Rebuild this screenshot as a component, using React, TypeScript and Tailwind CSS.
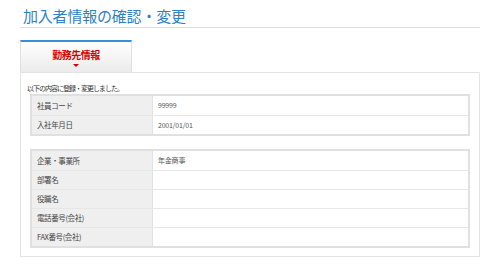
import React from 'react';

const font = { fontFamily: '"Noto Sans CJK JP", "Noto Sans", sans-serif' };

type Row = { label: string; value: string };

const empRows: Row[] = [
  { label: '社員コード', value: '99999' },
  { label: '入社年月日', value: '2001/01/01' },
];

const companyRows: Row[] = [
  { label: '企業・事業所', value: '年金商事' },
  { label: '部署名', value: '' },
  { label: '役職名', value: '' },
  { label: '電話番号(会社)', value: '' },
  { label: 'FAX番号(会社)', value: '' },
];

const InfoTable = ({ rows }: { rows: Row[] }) => (
  <div className="border-2 border-[#e0e0e0]">
    {rows.map((r, i) => (
      <div
        key={i}
        className={`grid grid-cols-[121px_1fr] h-[19px] ${i > 0 ? 'border-t border-[#e6e6e6]' : ''}`}
      >
        <div className="bg-[#efefef] border-r border-[#e2e2e2] pl-[5px] flex items-center text-[7.5px] text-[#444] tracking-[-0.4px]">
          {r.label}
        </div>
        <div className="bg-white pl-[5px] flex items-center text-[7px] text-[#555] tracking-[-0.2px]">{r.value}</div>
      </div>
    ))}
  </div>
);

export default function App() {
  return (
    <div className="w-[500px] h-[265px] bg-white px-5" style={font}>
      {/* Title */}
      <div className="pt-[8px] pb-[4px] pl-[3px] border-b border-[#dcdcdc]">
        <h1 className="text-[15px] leading-[15px] text-[#2f7fc1] font-normal tracking-[-0.2px]">加入者情報の確認・変更</h1>
      </div>

      {/* Tab */}
      <div className="mt-[12px] w-[112px] h-[32px] border-t-2 border-t-[#3b8fd8] border-x border-x-[#e0e0e0] bg-linear-to-b from-white to-[#ebebeb] flex flex-col items-center pt-[8px]">
        <span className="text-[10px] leading-[10px] font-bold text-[#d40000] tracking-[-0.5px]">勤務先情報</span>
        <span className="mt-[4px] w-0 h-0 border-l-[3px] border-r-[3px] border-t-[3px] border-l-transparent border-r-transparent border-t-[#d40000]" />
      </div>

      {/* Panel */}
      <div className="h-[185px] border border-[#e3e3e3] bg-white px-[9px] pt-[11px]">
        <p className="-ml-[3px] text-[7px] leading-[8px] text-[#333] tracking-[-1px]">以下の内容に登録・変更しました。</p>
        <div className="mt-[2px]">
          <InfoTable rows={empRows} />
        </div>
        <div className="mt-[13px]">
          <InfoTable rows={companyRows} />
        </div>
      </div>
    </div>
  );
}
